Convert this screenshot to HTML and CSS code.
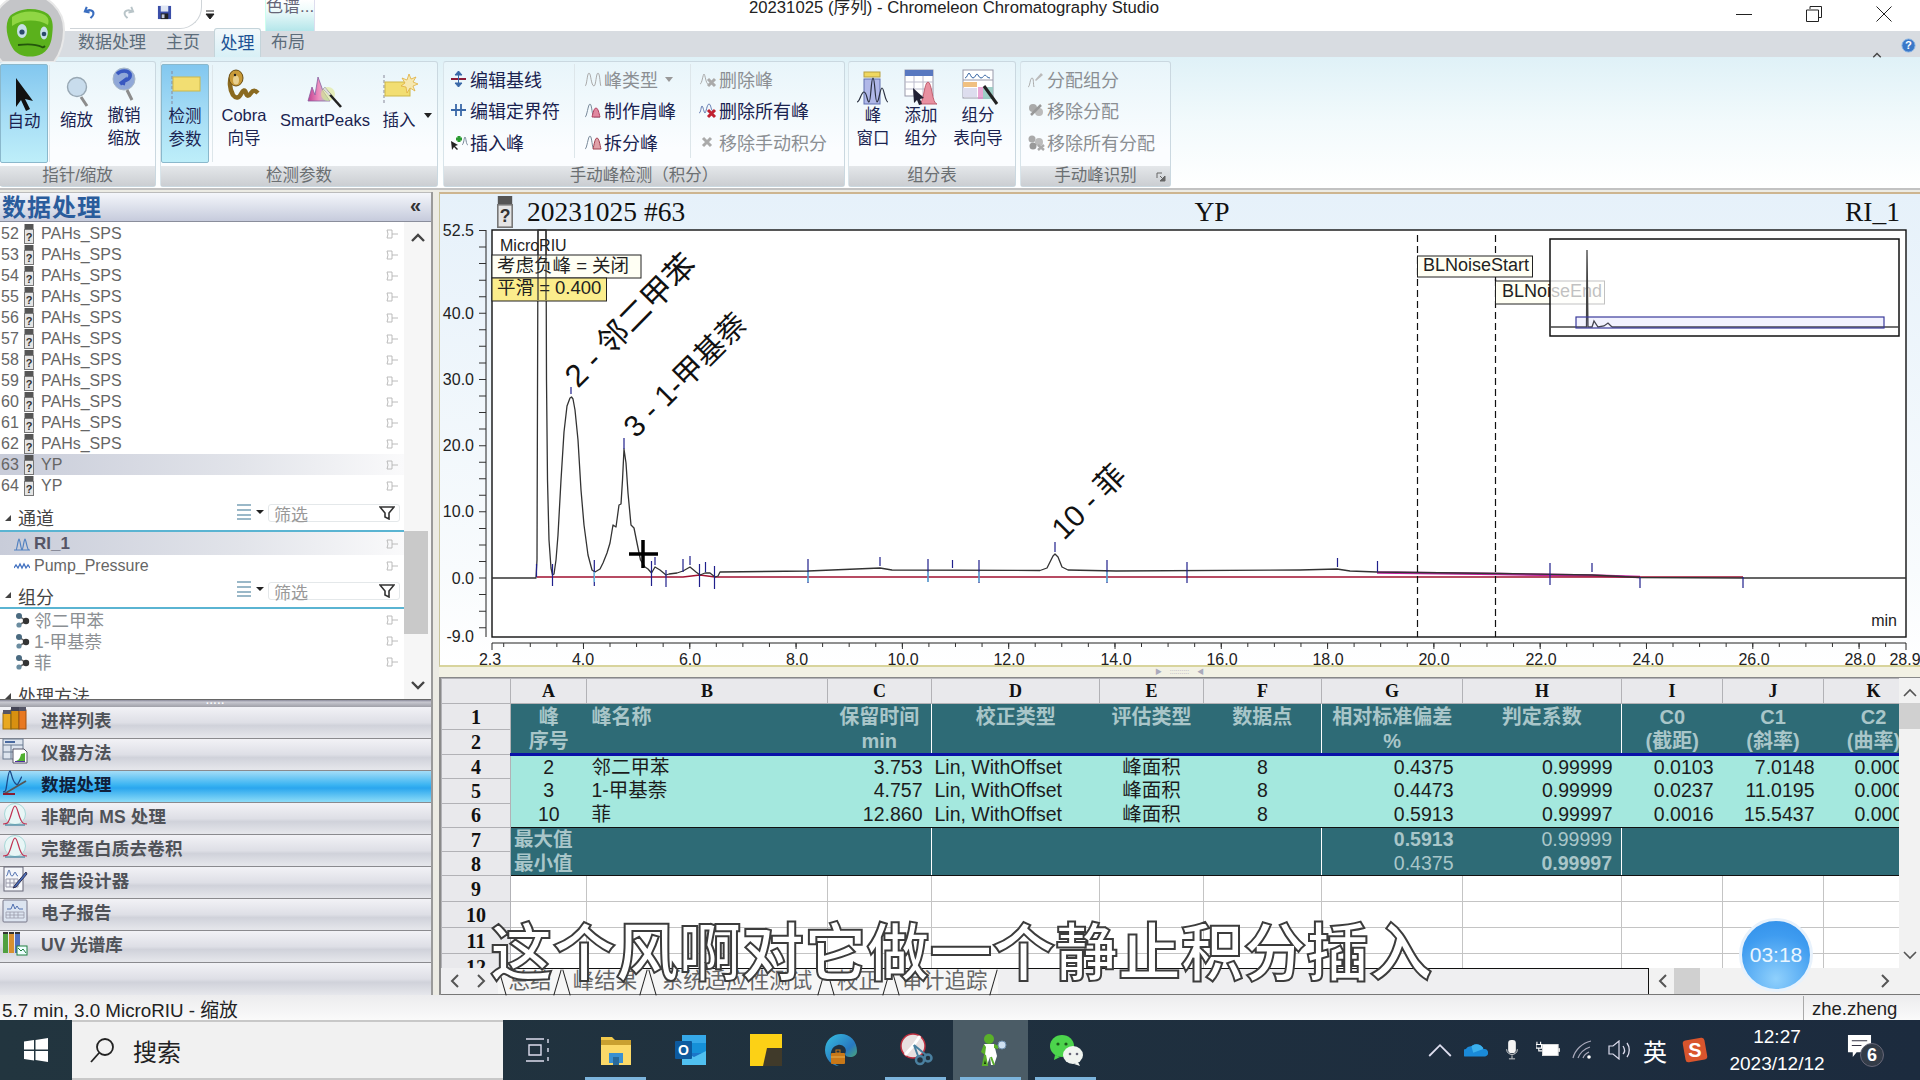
FILE: index.html
```html
<!DOCTYPE html>
<html lang="zh-CN">
<head>
<meta charset="utf-8">
<title>Chromeleon Chromatography Studio</title>
<link rel="stylesheet" href="styles.css">
</head>
<body>
<svg class="defs" width="0" height="0" aria-hidden="true">
  <defs>
    <symbol id="vial" viewBox="0 0 10 20">
      <rect x="0.5" y="0" width="9" height="5" fill="#555"/>
      <rect x="0.5" y="5.5" width="9" height="14" fill="#e4e4e4" stroke="#777"/>
      <text x="5" y="16.5" class="vialq">?</text>
    </symbol>
    <symbol id="pin" viewBox="0 0 14 12">
      <path d="M2 2h5v8H2l1-4zM7 6h6" fill="none" stroke="#b4b4b4" stroke-width=".9"/>
    </symbol>
    <symbol id="mol" viewBox="0 0 16 16">
      <path d="M5 4l7 5-7 4" fill="none" stroke="#666" stroke-width="1.5"/>
      <circle cx="5" cy="4" r="3" fill="#4a6a80"/>
      <circle cx="12" cy="9" r="3.2" fill="#333"/>
      <circle cx="5" cy="13" r="2.6" fill="#6a8ca0"/>
    </symbol>
    <symbol id="bars" viewBox="0 0 30 20">
      <path d="M2 3h14M2 8h14M2 13h14M2 17h14" stroke="#9ab8c8" stroke-width="2"/>
      <path d="M21 8h8l-4 4z" fill="#222"/>
    </symbol>
    <symbol id="funnel" viewBox="0 0 16 14">
      <path d="M1 1h14L10 7v6L6 11V7z" fill="#fff" stroke="#333" stroke-width="1.6"/>
    </symbol>
    <symbol id="peakc" viewBox="0 0 26 26">
      <circle cx="13" cy="12" r="10.5" fill="#e8f6f6" stroke="#a8d8d8"/>
      <path d="M1 22c5 0 5-1 7-6s3-12 5-12 3 7 5 12 3 6 7 6" fill="none" stroke="#c03050" stroke-width="1.2"/>
      <path d="M3 23h20" stroke="#207090" stroke-width="1"/>
    </symbol>
    <symbol id="tri" viewBox="0 0 8 8"><path d="M7 1v6H1z" fill="#444"/></symbol>
  </defs>
</svg>

<header class="titlebar">
  <svg class="logo" viewBox="0 0 76 62">
    <path d="M-8 30a36 36 0 0 1 72 0c0 12-4 24-10 32H2C-5 54-8 42-8 30z" fill="#c4c5c8" stroke="#e8e8e8" stroke-width="2"/>
    <path d="M10 16c10-9 28-9 38-2 6 6 5 14 4 22-1 10-6 18-16 20-10 2-20-1-24-9C7 38 4 24 10 16z" fill="#5bb11c"/>
    <path d="M12 17c10-7 24-7 33-2 4 3 4 6 3 10-10-6-26-6-36 1z" fill="#90d644"/>
    <ellipse cx="22" cy="31" rx="5" ry="7" fill="#c6dfe8"/>
    <ellipse cx="44" cy="33" rx="3.800" ry="6.500" fill="#c6dfe8"/>
    <circle cx="22" cy="32" r="2.600" fill="#2a4a6a"/>
    <circle cx="44" cy="34" r="2.300" fill="#2a4a6a"/>
    <path d="M18 45c8-1 18-1 24 2 1 1 2 0 3-1" fill="none" stroke="#23560c" stroke-width="1.8"/>
  </svg>
  <div class="qat">
    <svg class="qi" viewBox="0 0 16 16"><path d="M4 2l-2 5 5 1M3 7c4-3 9-1 8 3-.4 2-2 3-3 4" fill="none" stroke="#3a6ec0" stroke-width="2.2"/></svg>
    <svg class="qi" viewBox="0 0 16 16"><path d="M12 2l2 5-5 1M13 7c-4-3-9-1-8 3 .4 2 2 3 3 4" fill="none" stroke="#b8c4c8" stroke-width="2"/></svg>
    <svg class="qi" viewBox="0 0 16 16"><rect x="1" y="1" width="14" height="14" fill="#3a4ea8"/><rect x="4" y="1" width="8" height="6" fill="#dfe6f4"/><rect x="4" y="9" width="8" height="6" fill="#222"/><rect x="5" y="10" width="3" height="4" fill="#c0c8dc"/></svg>
  </div>
  <svg class="qmore" viewBox="0 0 10 10"><path d="M1 1h8M1 4h8l-4 5z" stroke="#222" fill="#222"/></svg>
  <div class="ctx">色谱...</div>
  <div class="wintitle">20231025 (序列) - Chromeleon Chromatography Studio</div>
  <div class="winbtns">
    <svg class="wb" viewBox="0 0 16 16"><path d="M0 8.5h16" stroke="#222"/></svg>
    <svg class="wb" viewBox="0 0 16 16"><path d="M4 3V.5h11.500v11H12.500M.5 4h12v11.500H.5z" fill="none" stroke="#222"/></svg>
    <svg class="wb" viewBox="0 0 16 16"><path d="M.5.5l15 15M15.500.5l-15 15" stroke="#222"/></svg>
  </div>
</header>

<nav class="tabs">
  <span class="tab t1">数据处理</span>
  <span class="tab t2">主页</span>
  <span class="tab t3">处理</span>
  <span class="tab t4">布局</span>
  <svg class="collapse" viewBox="0 0 12 8"><path d="M1 7l5-5 5 5" fill="none" stroke="#444" stroke-width="1.800"/></svg>
  <svg class="help" viewBox="0 0 16 16"><circle cx="8" cy="8" r="7" fill="#3a78c8" stroke="#8ab4e4"/><text x="8" y="12" class="helpq">?</text></svg>
</nav>

<section class="ribbon">
  <div class="rgroup g1">
    <div class="rbody">
      <div class="lg active w48">
        <svg class="lgi" viewBox="0 0 48 48"><path d="M16 13l17 23-8-2 5 10-4 2-5-11-5 7z" fill="#111"/></svg>
        <span class="one">自动</span>
      </div>
      <div class="rsep s1"></div>
      <div class="lg w47">
        <svg class="lgi" viewBox="0 0 48 48"><circle cx="24" cy="23" r="9.500" fill="#c8dcec" stroke="#98a8b4" stroke-width="1.400"/><path d="M28 33l6 9" stroke="#8c8c8c" stroke-width="3"/></svg>
        <span class="one">缩放</span>
      </div>
      <div class="lg w48">
        <svg class="lgi" viewBox="0 0 48 48"><circle cx="24" cy="15" r="11" fill="#90a8d8" stroke="#a8b8c8"/><path d="M17 10c4-4 11-4 13 0 1 4-3 7-7 7M20 20l4-3-1 4" fill="none" stroke="#3858c0" stroke-width="3.600"/><path d="M27 26l5 10" stroke="#8c8c8c" stroke-width="3"/></svg>
        <span>撤销<br>缩放</span>
      </div>
    </div>
    <div class="rlabel">指针/缩放</div>
  </div>

  <div class="rgroup g2">
    <div class="rbody">
      <div class="lg active w48">
        <svg class="lgi" viewBox="0 0 48 48"><path d="M11 6v34" stroke="#889" stroke-dasharray="3 2"/><rect x="12" y="12" width="27" height="14" fill="#f2de72" stroke="#cdb84a"/></svg>
        <span>检测<br>参数</span>
      </div>
      <div class="rsep s2"></div>
      <div class="lg w50">
        <svg class="lgi" viewBox="0 0 48 48"><path d="M13 12c-5 3-3 14 0 19 3 4 6 3 8-1s4-5 5-1 3 3 5 0 4-3 7 0" fill="none" stroke="#8a6a20" stroke-width="4.500"/><ellipse cx="16" cy="14" rx="7" ry="8" fill="#c89a38" stroke="#6a4e14"/><ellipse cx="16" cy="16" rx="3" ry="4.500" fill="#e8d090"/><circle cx="15" cy="11" r="1.200" fill="#222"/></svg>
        <span>Cobra<br>向导</span>
      </div>
      <div class="lg w90 ml12">
        <svg class="lgi wide" viewBox="0 0 90 48"><defs><linearGradient id="rb" x1="0" x2="1"><stop offset="0" stop-color="#c04090"/><stop offset=".5" stop-color="#f090c0"/><stop offset="1" stop-color="#80e0c0"/></linearGradient></defs><path d="M28 37l4-14 3 8 3-18 5 14 7 10z" fill="url(#rb)" stroke="#8860a0" stroke-width=".8"/><circle cx="48" cy="30" r="7" fill="#e0e890" opacity=".6"/><path d="M44 24l17 19" stroke="#222" stroke-width="2.600"/><path d="M44 24l6 7" stroke="#ddd" stroke-width="2.600"/></svg>
        <span class="one">SmartPeaks</span>
      </div>
      <div class="lg w44 ml7">
        <svg class="lgi" viewBox="0 0 48 48"><path d="M9 11v29" stroke="#889" stroke-dasharray="3 2"/><rect x="10" y="18" width="25" height="14" fill="#f2de72" stroke="#cdb84a"/><path d="M34 10l2 5 5-2-3 5 5 2-5 2 2 5-5-3-3 5-1-6-5-1 4-3-3-5 5 2z" fill="#f6e8b0" stroke="#e0b040" stroke-width=".8"/></svg>
        <span class="one">插入</span>
      </div>
      <svg class="drop d1" viewBox="0 0 8 5"><path d="M0 0h8L4 5z" fill="#222"/></svg>
    </div>
    <div class="rlabel">检测参数</div>
  </div>

  <div class="rgroup g3">
    <div class="rbody cols">
      <div class="col c31">
        <div class="sm"><svg class="si" viewBox="0 0 18 18"><path d="M1 9h15" stroke="#8c1c38" stroke-width="2"/><path d="M8.500 1v16M8.500 1L5 5h7zM8.500 17L5 13h7z" fill="#3a68a8" stroke="#3a68a8"/></svg>编辑基线</div>
        <div class="sm"><svg class="si" viewBox="0 0 18 18"><path d="M1 9h15M6 3v12M11 3v12" stroke="#3a68a8" stroke-width="1.800"/></svg>编辑定界符</div>
        <div class="sm"><svg class="si" viewBox="0 0 18 18"><path d="M1 8l1 9 2-3 3 3 1-1-3-3 3-1z" fill="#222"/><path d="M6 6h6M9 3v6" stroke="#2a9a30" stroke-width="3"/><path d="M12 12c2-1 2-8 3-8s1 8 3 8" fill="none" stroke="#789" stroke-width="1"/></svg>插入峰</div>
      </div>
      <div class="col c32">
        <div class="sm dis"><svg class="si" viewBox="0 0 18 18"><path d="M1 16c2 0 2-13 4-13s2 13 5 13c2 0 2-13 4-13s2 13 3 13" fill="none" stroke="#aaa"/></svg>峰类型<svg class="drop d2" viewBox="0 0 8 5"><path d="M0 0h8L4 5z" fill="#999"/></svg></div>
        <div class="sm"><svg class="si" viewBox="0 0 18 18"><path d="M1 16c2 0 3-13 5-13s2 13 4 13c2 0 3 0 6 0" fill="none" stroke="#789"/><path d="M8 16c1-4 2-9 4-9s3 5 4 9z" fill="#e088a0" stroke="#b04060"/></svg>制作肩峰</div>
        <div class="sm"><svg class="si" viewBox="0 0 18 18"><path d="M1 16c2 0 3-13 5-13s2 13 4 13" fill="none" stroke="#789"/><path d="M9 16c1-4 2-11 4-11s3 7 4 11z" fill="#e0a0a8" stroke="#a04050"/></svg>拆分峰</div>
      </div>
      <div class="col c33">
        <div class="sm dis"><svg class="si" viewBox="0 0 18 18"><path d="M1 14c2 0 3-10 4-10s2 10 4 10" fill="none" stroke="#aaa"/><path d="M9 9l7 7M16 9l-7 7" stroke="#aaa" stroke-width="3"/></svg>删除峰</div>
        <div class="sm"><svg class="si" viewBox="0 0 18 18"><path d="M0 12c2 0 2-7 3-7s2 7 3 7 2-9 4-9 2 7 4 7" fill="none" stroke="#6078b0"/><path d="M9 9l7 7M16 9l-7 7" stroke="#c02030" stroke-width="3"/></svg>删除所有峰</div>
        <div class="sm dis"><svg class="si" viewBox="0 0 18 18"><path d="M4 5l8 8M12 5l-8 8" stroke="#aaa" stroke-width="3"/></svg>移除手动积分</div>
      </div>
    </div>
    <div class="rlabel">手动峰检测（积分）</div>
  </div>

  <div class="rgroup g4">
    <div class="rbody">
      <div class="lg w48">
        <svg class="lgi" viewBox="0 0 48 48"><rect x="15" y="8" width="16" height="5" fill="#f0d860" stroke="#b8a040"/><rect x="15" y="15" width="16" height="25" fill="#b0b8e8" stroke="#6070b0"/><path d="M8 38c3 0 4-10 7-10s3 10 5 10 2-24 4-24 2 24 4 24 3-14 5-14 3 14 6 14" fill="none" stroke="#2a3040" stroke-width="1.200"/></svg>
        <span>峰<br>窗口</span>
      </div>
      <div class="lg w48">
        <svg class="lgi" viewBox="0 0 48 48"><rect x="8" y="6" width="28" height="26" fill="#fff" stroke="#99a"/><rect x="8" y="6" width="28" height="6" fill="#5878c0"/><path d="M8 18h28M8 25h28M17 12v20M26 12v20" stroke="#bbc"/><path d="M22 40c5 0 5-22 9-22s4 22 9 22z" fill="#e890a0" stroke="#c06070"/><path d="M16 24l11 10-4 1 2 5-3 1-2-5-3 3z" fill="#223"/></svg>
        <span>添加<br>组分</span>
      </div>
      <div class="lg w66">
        <svg class="lgi" viewBox="0 0 48 48"><rect x="9" y="6" width="30" height="28" fill="#fff" stroke="#99a"/><path d="M11 14c2 0 3-5 4-5s2 5 4 5 3-4 4-4 2 4 4 4 3-3 4-3 2 3 5 3" fill="none" stroke="#3060a0"/><path d="M9 16h30" stroke="#99a"/><rect x="9" y="18" width="14" height="5" fill="#f0c080"/><rect x="9" y="24" width="14" height="9" fill="#dde"/><rect x="24" y="23" width="15" height="12" fill="#e080c0" opacity=".7"/><rect x="29" y="23" width="10" height="12" fill="#80e0c0" opacity=".7"/><path d="M30 22l13 18" stroke="#222" stroke-width="3"/></svg>
        <span>组分<br>表向导</span>
      </div>
    </div>
    <div class="rlabel">组分表</div>
  </div>

  <div class="rgroup g5">
    <div class="rbody cols">
      <div class="col c51">
        <div class="sm dis"><svg class="si" viewBox="0 0 18 18"><path d="M1 17c2 0 2-9 4-9s1 6 2 9" fill="none" stroke="#aaa"/><path d="M8 10l6-7 2 2-7 6z" fill="#bbb"/></svg>分配组分</div>
        <div class="sm dis"><svg class="si" viewBox="0 0 18 18"><circle cx="6" cy="7" r="4" fill="#aaa"/><circle cx="12" cy="11" r="4" fill="#bbb"/><path d="M4 14l10-10" stroke="#999" stroke-width="2.500"/></svg>移除分配</div>
        <div class="sm dis"><svg class="si" viewBox="0 0 18 18"><circle cx="5" cy="6" r="3.500" fill="#aaa"/><circle cx="12" cy="9" r="4" fill="#bbb"/><circle cx="6" cy="13" r="3.500" fill="#999"/><path d="M11 12l6 5M17 12l-6 5" stroke="#aaa" stroke-width="2.500"/></svg>移除所有分配</div>
      </div>
    </div>
    <div class="rlabel">手动峰识别<svg class="launch" viewBox="0 0 10 10"><path d="M1 1h5M1 1v5" stroke="#666"/><path d="M4 4l4 4M9 4v5H4z" stroke="#666" fill="#666"/></svg></div>
  </div>
</section>

<main class="main">
  <aside class="left">
    <div class="lhead"><span>数据处理</span><span class="dbl">«</span></div>
    <div class="lscroll">
      <div class="lcontent">
        <div class="list">
          <div class="row"><span class="num">52</span><svg class="vi"><use href="#vial"/></svg><span>PAHs_SPS</span><svg class="pn"><use href="#pin"/></svg></div>
          <div class="row"><span class="num">53</span><svg class="vi"><use href="#vial"/></svg><span>PAHs_SPS</span><svg class="pn"><use href="#pin"/></svg></div>
          <div class="row"><span class="num">54</span><svg class="vi"><use href="#vial"/></svg><span>PAHs_SPS</span><svg class="pn"><use href="#pin"/></svg></div>
          <div class="row"><span class="num">55</span><svg class="vi"><use href="#vial"/></svg><span>PAHs_SPS</span><svg class="pn"><use href="#pin"/></svg></div>
          <div class="row"><span class="num">56</span><svg class="vi"><use href="#vial"/></svg><span>PAHs_SPS</span><svg class="pn"><use href="#pin"/></svg></div>
          <div class="row"><span class="num">57</span><svg class="vi"><use href="#vial"/></svg><span>PAHs_SPS</span><svg class="pn"><use href="#pin"/></svg></div>
          <div class="row"><span class="num">58</span><svg class="vi"><use href="#vial"/></svg><span>PAHs_SPS</span><svg class="pn"><use href="#pin"/></svg></div>
          <div class="row"><span class="num">59</span><svg class="vi"><use href="#vial"/></svg><span>PAHs_SPS</span><svg class="pn"><use href="#pin"/></svg></div>
          <div class="row"><span class="num">60</span><svg class="vi"><use href="#vial"/></svg><span>PAHs_SPS</span><svg class="pn"><use href="#pin"/></svg></div>
          <div class="row"><span class="num">61</span><svg class="vi"><use href="#vial"/></svg><span>PAHs_SPS</span><svg class="pn"><use href="#pin"/></svg></div>
          <div class="row"><span class="num">62</span><svg class="vi"><use href="#vial"/></svg><span>PAHs_SPS</span><svg class="pn"><use href="#pin"/></svg></div>
          <div class="row sel"><span class="num">63</span><svg class="vi"><use href="#vial"/></svg><span>YP</span><svg class="pn"><use href="#pin"/></svg></div>
          <div class="row"><span class="num">64</span><svg class="vi"><use href="#vial"/></svg><span>YP</span><svg class="pn"><use href="#pin"/></svg></div>
        </div>
        <div class="sect first"><svg class="tr"><use href="#tri"/></svg><span class="stitle">通道</span><svg class="br"><use href="#bars"/></svg><div class="filter"><span>筛选</span><svg class="fn"><use href="#funnel"/></svg></div></div>
        <div class="row sub sel chn"><svg class="ci" viewBox="0 0 16 14"><path d="M0 13h16M2 13c1 0 2-11 3-11s2 11 3 11 2-11 3-11 2 11 4 11" fill="none" stroke="#5080c0" stroke-width="1.200"/></svg><b>RI_1</b><svg class="pn"><use href="#pin"/></svg></div>
        <div class="row sub"><svg class="ci" viewBox="0 0 16 14"><path d="M0 9l2-3 2 3 2-4 2 4 2-4 2 4 2-3 2 3" fill="none" stroke="#4070c0" stroke-width="1.300"/></svg><span>Pump_Pressure</span><svg class="pn"><use href="#pin"/></svg></div>
        <div class="sect second"><svg class="tr"><use href="#tri"/></svg><span class="stitle">组分</span><svg class="br"><use href="#bars"/></svg><div class="filter"><span>筛选</span><svg class="fn"><use href="#funnel"/></svg></div></div>
        <div class="row sub cmp"><svg class="ci" viewBox="0 0 16 16"><use href="#mol"/></svg><span>邻二甲苯</span><svg class="pn"><use href="#pin"/></svg></div>
        <div class="row sub cmp"><svg class="ci" viewBox="0 0 16 16"><use href="#mol"/></svg><span>1-甲基萘</span><svg class="pn"><use href="#pin"/></svg></div>
        <div class="row sub cmp"><svg class="ci" viewBox="0 0 16 16"><use href="#mol"/></svg><span>菲</span><svg class="pn"><use href="#pin"/></svg></div>
        <div class="sect last"><svg class="tr"><use href="#tri"/></svg><span class="stitle">处理方法</span></div>
      </div>
      <div class="lsb">
        <svg class="chev" viewBox="0 0 14 10"><path d="M1 8l6-6 6 6" fill="none" stroke="#444" stroke-width="2.400"/></svg>
        <div class="thumb"></div>
        <svg class="chev down" viewBox="0 0 14 10"><path d="M1 2l6 6 6-6" fill="none" stroke="#444" stroke-width="2.400"/></svg>
      </div>
    </div>
    <div class="lsplit"><i>.....</i></div>
    <div class="nav">
      <div class="nitem"><svg class="ni" viewBox="0 0 26 26"><rect x="1" y="7" width="8" height="16" fill="#e8a820" stroke="#a07010"/><rect x="9" y="4" width="8" height="19" fill="#d89010" stroke="#806010"/><rect x="17" y="4" width="7" height="19" fill="#e87820" stroke="#a05010"/><rect x="1" y="4" width="8" height="4" fill="#556"/><rect x="9" y="1" width="8" height="4" fill="#445"/><rect x="17" y="1" width="7" height="4" fill="#556"/></svg><span>进样列表</span></div>
      <div class="nitem"><svg class="ni" viewBox="0 0 26 26"><rect x="1" y="1" width="20" height="20" fill="#dde4ee" stroke="#6a7a90"/><path d="M1 7h20M1 14h12M9 7v14" stroke="#6a7a90"/><rect x="3" y="3" width="10" height="2" fill="#4a6aa0"/><path d="M11 11h11l3 3v11H11z" fill="#fff" stroke="#556"/><path d="M13 23c3 0 5-2 6-7l4-1v8z" fill="#50b030"/><path d="M13 23h10v1H13z" fill="#5030a0"/></svg><span>仪器方法</span></div>
      <div class="nitem on"><svg class="ni" viewBox="0 0 26 26"><path d="M1 22c3 0 3-2 4-9s2-12 3-12 2 9 5 12 2 2 4-1 2-5 3-5" fill="none" stroke="#1a4a8a" stroke-width="1.300"/><path d="M2 24l22-13" stroke="#555" stroke-width="1.800"/><path d="M1 24h12" stroke="#8a1c30" stroke-width="2"/></svg><span>数据处理</span></div>
      <div class="nitem"><svg class="ni"><use href="#peakc"/></svg><span>非靶向 MS 处理</span></div>
      <div class="nitem"><svg class="ni"><use href="#peakc"/></svg><span>完整蛋白质去卷积</span></div>
      <div class="nitem"><svg class="ni" viewBox="0 0 26 26"><rect x="2" y="1" width="19" height="24" fill="#f4f6fa" stroke="#667"/><path d="M4 10c2 0 2-6 3-6s1 6 3 6 2-4 3-4 1 4 3 4" fill="none" stroke="#5070b0"/><path d="M4 13h12v8H4zM8 13v8M12 13v8M4 17h12" fill="none" stroke="#99a"/><path d="M24 6l-11 13-2 3 3-1L25 8z" fill="#4870c0" stroke="#335"/></svg><span>报告设计器</span></div>
      <div class="nitem"><svg class="ni" viewBox="0 0 26 26"><rect x="1" y="2" width="24" height="22" rx="1" fill="#dce4f0" stroke="#778"/><path d="M5 11h4l2-5 2 5 2-3 2 3h4" fill="none" stroke="#5070b0"/><path d="M4 14h18v6H4zM4 17h18M8 14v6M12 14v6M16 14v6" fill="none" stroke="#99a" stroke-width=".8"/></svg><span>电子报告</span></div>
      <div class="nitem"><svg class="ni" viewBox="0 0 26 26"><rect x="1" y="3" width="5" height="20" fill="#50a040"/><rect x="7" y="3" width="5" height="20" fill="#d89030"/><rect x="13" y="3" width="5" height="20" fill="#5070c0"/><path d="M1 3h5M7 3h5M13 3h5" stroke="#333" stroke-width="2"/><rect x="15" y="16" width="10" height="9" fill="#eff" stroke="#208040"/><path d="M16 18l3 3 2-2 3 4" fill="none" stroke="#208040"/></svg><span class="cap">UV 光谱库</span></div>
      <div class="nitem empty"></div>
    </div>
  </aside>

  <section class="right">
    <div class="cpanel">
      <div class="chead">
        <div class="chl"><svg class="cvial"><use href="#vial"/></svg><span>20231025 #63</span></div>
        <div class="chm">YP</div>
        <div class="chr">RI_1</div>
      </div>
      <svg class="plot" viewBox="441 230 1479 438">
        <rect x="492" y="230" width="1414" height="407" class="pbg"/>
        <!-- y axis -->
        <path d="M486 230V637" class="ax"/>
        <path d="M482.500 230V637" class="tk ym"/>
        <text x="474" y="236" class="lbl ya">52.5</text>
        <text x="474" y="319" class="lbl ya">40.0</text>
        <text x="474" y="385" class="lbl ya">30.0</text>
        <text x="474" y="451" class="lbl ya">20.0</text>
        <text x="474" y="517" class="lbl ya">10.0</text>
        <text x="474" y="584" class="lbl ya">0.0</text>
        <text x="474" y="642" class="lbl ya">-9.0</text>
        <!-- x axis -->
        <path d="M492 643H1906" class="ax"/>
        <path d="M503.200 645H1906" class="tk xm"/>
        <path d="M583 646H1906" class="tk xj"/>
        <path d="M492 643v7M1906 643v7" class="ax"/>
        <text x="490" y="665" class="lbl xa">2.3</text>
        <text x="583" y="665" class="lbl xa">4.0</text>
        <text x="690" y="665" class="lbl xa">6.0</text>
        <text x="797" y="665" class="lbl xa">8.0</text>
        <text x="903" y="665" class="lbl xa">10.0</text>
        <text x="1009" y="665" class="lbl xa">12.0</text>
        <text x="1116" y="665" class="lbl xa">14.0</text>
        <text x="1222" y="665" class="lbl xa">16.0</text>
        <text x="1328" y="665" class="lbl xa">18.0</text>
        <text x="1434" y="665" class="lbl xa">20.0</text>
        <text x="1541" y="665" class="lbl xa">22.0</text>
        <text x="1648" y="665" class="lbl xa">24.0</text>
        <text x="1754" y="665" class="lbl xa">26.0</text>
        <text x="1860" y="665" class="lbl xa">28.0</text>
        <text x="1905" y="665" class="lbl xa">28.9</text>
        <text x="1897" y="626" class="lbl ya">min</text>
        <!-- baseline and fill -->
        <path d="M1377 572.500L1500 574L1592 575.500L1640 577" class="mag"/>
        <path d="M537 577H683L700 575 715 577H1743" class="red"/>
        <!-- trace -->
        <polyline class="trace" points="492,578 536,578 537,560 538,230 546,230 546.500,380 547.500,480 549,540 551,568 552.500,575 554,574 556,560 558,535 561,480 564,432 567,406 570,398 571.500,397 573,399 575,410 578,440 581,490 584,525 588,555 592,570 595,572 600,569 603,563 607,553 610,543 613,525 616,527 619,505 621,504 622.500,480 624,449 626,463 628,493 631,525 634,528 637,543 640.500,560 645,567 648,569 651.500,573 655,567 660,570 666,575 669,574 677,573 683,571 690,567 696,572 700,575 705,573 710,573 715,577 718,576 720,572 808,571 880,568 892,570 1040,570.500 1047,568 1051,560 1053,556 1055,554 1058,557 1062,567 1068,570 1116,571 1300,570 1337,569 1350,571 1377,572 1500,573.500 1592,575 1640,577.500 1743,578 1906,578"/>
        <!-- peak markers -->
        <path class="mk" d="M536.500 564V577M552.500 564V586M594.300 560V586M651.500 561V586M655 557V565M666 570V587M683 559V572M690 556V565M699.500 564V587M705.500 562V572M714.500 566V589M808 559V583M880 557V566M928 559V582M952.500 560V568M979 560V583M1055 542V552M1107 560V583M1187 562V583M571 387V394M624 438V449M1337.500 558V567M1377.500 561V572M1550 563V585M1592 563V572M1640 577V588M1743 577V588"/>
        <path class="mkb" d="M808 572V582M928 572V582M979 572V582M1107 572V582M594.300 572V582"/>
        <!-- retention labels -->
        <text x="0" y="0" class="pklbl pk1" transform="translate(578,389) rotate(-45.500)">2 - 邻二甲苯</text>
        <text x="0" y="0" class="pklbl" transform="translate(636,439) rotate(-45)">3 - 1-甲基萘</text>
        <text x="0" y="0" class="pklbl" transform="translate(1064,541) rotate(-45)">10 - 菲</text>
        <!-- parameter tags -->
        <text x="500" y="251" class="lbl">MicroRIU</text>
        <rect x="492" y="255" width="149" height="23" class="tag"/>
        <text x="497" y="272" class="tagt">考虑负峰 = 关闭</text>
        <rect x="492" y="278" width="114.500" height="23" class="tagy"/>
        <text x="497" y="293.500" class="tagt">平滑 = 0.400</text>
        <path d="M538 230V300M546 230V300" class="inj"/>
        <!-- noise range -->
        <path d="M1417.500 235V637M1495.500 235V637" class="dash"/>
        <rect x="1417.500" y="256" width="115" height="21" class="tag"/>
        <text x="1423" y="270.500" class="lbl big">BLNoiseStart</text>
        <rect x="1495.500" y="281" width="109" height="23" class="tag"/>
        <text x="1502" y="297" class="lbl big">BLNoiseEnd</text>
        <path d="M1495.500 277V281" class="dash"/>
        <!-- overview -->
        <rect x="1550" y="239" width="349" height="97" class="inset"/>
        <path d="M1550 327H1584M1612 327H1899" class="itr"/>
        <polyline class="itr" points="1584,327 1586.500,327 1587,250 1588,327 1592,327 1594,321 1598,327 1604,326 1608,323 1612,327"/>
        <rect x="1576" y="317" width="308" height="11" class="ibox"/>
        <!-- cursor -->
        <path d="M629 554H658M643 540V568" class="cross"/>
      </svg>
    </div>
    <div class="hsplit"><i class="arr">▶</i><i class="dots">::::::::::</i><i class="arr">◀</i></div>
    <div class="grid">
      <div class="gtable">
        <table>
          <colgroup><col class="c0"><col class="ca"><col class="cb"><col class="cc"><col class="cd"><col class="ce"><col class="cf"><col class="cg"><col class="ch"><col class="ci2"><col class="cj"><col class="ck"></colgroup>
          <tr class="r-col"><th class="corner"></th><th>A</th><th>B</th><th>C</th><th>D</th><th>E</th><th>F</th><th>G</th><th>H</th><th>I</th><th>J</th><th>K</th></tr>
          <tr class="r26 hd"><th class="rn">1</th><td class="ctr">峰</td><td class="lft">峰名称</td><td class="ctr">保留时间</td><td class="ctr wl">校正类型</td><td class="ctr">评估类型</td><td class="ctr">数据点</td><td class="ctr wl">相对标准偏差</td><td class="ctr">判定系数</td><td class="ctr wl">C0</td><td class="ctr">C1</td><td class="ctr">C2</td></tr>
          <tr class="r25b hd bl"><th class="rn">2</th><td class="ctr">序号</td><td class="lft"></td><td class="ctr">min</td><td class="wl"></td><td></td><td></td><td class="ctr wl">%</td><td></td><td class="ctr wl">(截距)</td><td class="ctr">(斜率)</td><td class="ctr">(曲率)</td></tr>
          <tr class="r24 dt"><th class="rn">4</th><td class="ctr">2</td><td class="lft">邻二甲苯</td><td class="rgt">3.753</td><td class="lf3">Lin, WithOffset</td><td class="ctr">峰面积</td><td class="ctr">8</td><td class="rgt">0.4375</td><td class="rgt">0.99999</td><td class="rgt">0.0103</td><td class="rgt">7.0148</td><td class="k">0.0000</td></tr>
          <tr class="r24 dt"><th class="rn">5</th><td class="ctr">3</td><td class="lft">1-甲基萘</td><td class="rgt">4.757</td><td class="lf3">Lin, WithOffset</td><td class="ctr">峰面积</td><td class="ctr">8</td><td class="rgt">0.4473</td><td class="rgt">0.99999</td><td class="rgt">0.0237</td><td class="rgt">11.0195</td><td class="k">0.0000</td></tr>
          <tr class="r24 dt end"><th class="rn">6</th><td class="ctr">10</td><td class="lft">菲</td><td class="rgt">12.860</td><td class="lf3">Lin, WithOffset</td><td class="ctr">峰面积</td><td class="ctr">8</td><td class="rgt">0.5913</td><td class="rgt">0.99997</td><td class="rgt">0.0016</td><td class="rgt">15.5437</td><td class="k">0.0000</td></tr>
          <tr class="r25 sm1"><th class="rn">7</th><td class="lf2" colspan="2">最大值</td><td></td><td class="wl"></td><td></td><td></td><td class="rgt wl strong">0.5913</td><td class="rgt">0.99999</td><td class="wl"></td><td></td><td></td></tr>
          <tr class="r25 sm1 end2"><th class="rn">8</th><td class="lf2" colspan="2">最小值</td><td></td><td class="wl"></td><td></td><td></td><td class="rgt wl">0.4375</td><td class="rgt strong">0.99997</td><td class="wl"></td><td></td><td></td></tr>
          <tr class="r26 em"><th class="rn">9</th><td></td><td></td><td></td><td></td><td></td><td></td><td></td><td></td><td></td><td></td><td></td></tr>
          <tr class="r26 em"><th class="rn">10</th><td></td><td></td><td></td><td></td><td></td><td></td><td></td><td></td><td></td><td></td><td></td></tr>
          <tr class="r26 em"><th class="rn">11</th><td></td><td></td><td></td><td></td><td></td><td></td><td></td><td></td><td></td><td></td><td></td></tr>
          <tr class="r26 em"><th class="rn">12</th><td></td><td></td><td></td><td></td><td></td><td></td><td></td><td></td><td></td><td></td><td></td></tr>
        </table>
        <div class="vsb">
          <svg class="vch" viewBox="0 0 14 10"><path d="M1 8l6-6 6 6" fill="none" stroke="#555" stroke-width="1.600"/></svg>
          <div class="vth"></div>
          <svg class="vch dn" viewBox="0 0 14 10"><path d="M1 2l6 6 6-6" fill="none" stroke="#555" stroke-width="1.600"/></svg>
        </div>
      </div>
      <div class="sheets">
        <div class="snav"><svg class="sa" viewBox="0 0 10 14"><path d="M8 1L2 7l6 6" fill="none" stroke="#555" stroke-width="2"/></svg><svg class="sa" viewBox="0 0 10 14"><path d="M2 1l6 6-6 6" fill="none" stroke="#555" stroke-width="2"/></svg></div>
        <div class="stabs">
          <span class="stab w64">总结</span><span class="stab w86">峰结果</span><span class="stab w178">系统适应性测试</span><span class="stab w65">校正</span><span class="stab w107">审计追踪</span>
        </div>
        <div class="hscroll">
          <svg class="sa" viewBox="0 0 10 14"><path d="M8 1L2 7l6 6" fill="none" stroke="#555" stroke-width="2"/></svg>
          <div class="hth"></div>
          <svg class="sa ra" viewBox="0 0 10 14"><path d="M2 1l6 6-6 6" fill="none" stroke="#555" stroke-width="2"/></svg>
        </div>
      </div>
    </div>
  </section>
</main>

<footer class="status"><span>5.7 min, 3.0 MicroRIU - 缩放</span><span class="user">zhe.zheng</span></footer>

<footer class="taskbar">
  <div class="start"><svg class="winlogo" viewBox="0 0 24 24"><path d="M0 3.500l10-1.400v9.400H0zM11.500 1.900L24 0v11.500H11.500zM0 13h10v9.400L0 21zM11.500 13H24v11l-12.500-1.900z" fill="#fff"/></svg></div>
  <div class="search"><svg class="mag" viewBox="0 0 26 26"><circle cx="15" cy="10" r="8" fill="none" stroke="#222" stroke-width="1.800"/><path d="M9 16l-8 9" stroke="#222" stroke-width="1.800"/></svg><span>搜索</span></div>
  <div class="slot tv"><svg class="tvi" viewBox="0 0 24 24"><path d="M0 1h18M0 23h18M3 7h12v10H3zM22 1v4M22 10v4M22 19v4" fill="none" stroke="#dde" stroke-width="1.400"/></svg></div>
  <div class="slot line"><svg class="app" viewBox="0 0 34 34"><path d="M2 4h11l3 3h16v25H2z" fill="#f2c94c"/><path d="M2 7h30v5H2z" fill="#c9a030"/><path d="M2 12h30v20H2z" fill="#fbd968"/><path d="M10 20h14v10h-4v-6h-6v6h-4z" fill="#3a90d0"/><path d="M14 24h6v8h-6z" fill="#2a6a9a"/></svg></div>
  <div class="slot"><svg class="app" viewBox="0 0 34 34"><path d="M8 2h24v30H8z" fill="#1b75c8"/><path d="M8 2h24v8H8z" fill="#35a8e8"/><path d="M16 10h16v10H16z" fill="#1590d8"/><path d="M8 18l12 6 12-6v14H8z" fill="#50c0f0"/><rect x="1" y="8" width="17" height="18" rx="1" fill="#0d5a9e"/><text x="9.500" y="22" class="oglyph">O</text></svg></div>
  <div class="slot"><svg class="app" viewBox="0 0 34 34"><path d="M1 1h32v32H1z" fill="#fcd116"/><path d="M33 15v18H14l4-18z" fill="#403a2a"/></svg></div>
  <div class="slot"><svg class="app" viewBox="0 0 34 34"><defs><linearGradient id="edg" x1="0" y1="0" x2="1" y2="1"><stop offset="0" stop-color="#37c0e0"/><stop offset=".6" stop-color="#2878c0"/><stop offset="1" stop-color="#60c050"/></linearGradient></defs><path d="M1 17C1 7 9 1 17 1c9 0 16 7 16 17 0 4-3 6-7 6-3 0-5-1-5-3 3-5-2-10-7-9-6 1-9 8-6 14 1 3 4 6 7 7C8 33 1 26 1 17z" fill="url(#edg)"/><rect x="7" y="20" width="14" height="11" rx="1" fill="#c87818"/><rect x="12" y="17" width="4" height="3" fill="none" stroke="#c87818"/><path d="M7 24h14" stroke="#e8b050"/></svg></div>
  <div class="slot line"><svg class="app" viewBox="0 0 34 34"><circle cx="14" cy="13" r="12" fill="#e8e0e0" stroke="#c03040" stroke-width="1.500"/><path d="M14 13l7-10M14 13l-8 9" stroke="#fff" stroke-width="3"/><circle cx="21" cy="27" r="4" fill="none" stroke="#4a80a0" stroke-width="2.500"/><circle cx="29" cy="25" r="3.500" fill="none" stroke="#4a80a0" stroke-width="2.500"/><path d="M19 23l-4-11M27 22L15 12" stroke="#4a80a0" stroke-width="2"/></svg></div>
  <div class="slot hi line"><svg class="app" viewBox="0 0 34 34"><circle cx="15" cy="6" r="5" fill="#5ab02a"/><path d="M10 11h10l3 12-3 9h-3l-1-8-3 8h-4l2-10z" fill="#fff"/><path d="M10 11l-3 8 4 3 1-8zM20 11l5 2-1 3-4-1z" fill="#5ab02a"/><path d="M11 22l-2 10h4zM17 24l3 8" stroke="#5ab02a" stroke-width="2"/><circle cx="28" cy="12" r="4" fill="#cfe0f0" stroke="#7090b0"/></svg></div>
  <div class="slot line"><svg class="app" viewBox="0 0 34 34"><ellipse cx="13" cy="13" rx="12" ry="11" fill="#4cd44c"/><path d="M6 22l-1 5 6-3z" fill="#4cd44c"/><ellipse cx="24" cy="22" rx="10" ry="9" fill="#f0f4f0"/><path d="M29 29l2 4-6-2z" fill="#f0f4f0"/><circle cx="9" cy="11" r="1.600" fill="#1a5a1a"/><circle cx="17" cy="11" r="1.600" fill="#1a5a1a"/><circle cx="21" cy="21" r="1.300" fill="#667"/><circle cx="28" cy="21" r="1.300" fill="#667"/></svg></div>
  <div class="tray">
    <svg class="tri" viewBox="0 0 20 12"><path d="M1 11l9-9 9 9" fill="none" stroke="#dde" stroke-width="1.500"/></svg>
    <svg class="tri" viewBox="0 0 26 16"><path d="M2 15a4 4 0 0 1 0-8 6 6 0 0 1 6-3 8 8 0 0 1 13 3 4 4 0 0 1 2 8z" fill="#1a8ad8"/><path d="M8 4a8 8 0 0 1 13 3L10 11z" fill="#3cb0ec"/></svg>
    <svg class="tri" viewBox="0 0 16 26"><rect x="3" y="0" width="10" height="17" rx="4" fill="#f4f4f4"/><path d="M1 12c0 9 14 9 14 0M8 20v4M4 24.500h8" fill="none" stroke="#ddd" stroke-width="1.200"/></svg>
    <svg class="tri" viewBox="0 0 26 20"><path d="M1 1v3M5 1v3M0 4h6v4H0zM3 8v3h4" fill="none" stroke="#fff" stroke-width="1.200"/><rect x="7" y="4" width="17" height="12" fill="#fff" stroke="#ddd"/><rect x="24" y="8" width="2" height="4" fill="#ddd"/></svg>
    <svg class="tri" viewBox="0 0 24 20"><path d="M1 18C3 10 10 3 19 1M6 18c2-5 6-9 12-11M11 18c1-3 4-5 6-6" fill="none" stroke="#aab" stroke-width="1.200"/><circle cx="17" cy="17" r="1.800" fill="#fff"/></svg>
    <svg class="tri" viewBox="0 0 24 20"><path d="M1 6h4l6-5v18l-6-5H1z" fill="none" stroke="#dde" stroke-width="1.200"/><path d="M15 6c2 3 2 6 0 8M19 3c3 4 3 10 0 14" fill="none" stroke="#dde" stroke-width="1.300"/></svg>
    <span class="ime">英</span>
    <svg class="sogou" viewBox="0 0 26 26"><rect x="2" y="2" width="22" height="22" rx="3" fill="#d9552d" transform="rotate(-10 13 13)"/><text x="13" y="20" class="sglyph">S</text></svg>
    <div class="clock"><span>12:27</span><span>2023/12/12</span></div>
    <div class="notif"><svg class="nbub" viewBox="0 0 26 26"><path d="M1 1h24v18H10l-4 5v-5H1z" fill="#fff"/><path d="M5 7h16M5 12h10" stroke="#334" stroke-width="1.200"/></svg><span class="badge">6</span></div>
  </div>
</footer>

<div class="subtitle">这个风啊对它做一个静止积分插入</div>
<div class="timer">03:18</div>
</body>
</html>
```

FILE: styles.css
```css
* { box-sizing: border-box; }
html, body { margin: 0; padding: 0; }
body {
  width: 1920px; height: 1080px; overflow: hidden; position: relative;
  display: flex; flex-direction: column;
  font-family: "Liberation Sans", "Noto Sans CJK SC", sans-serif;
  background: #fff; color: #222;
}
.defs { position: absolute; }
.vialq { font: bold 11px "Liberation Sans", sans-serif; text-anchor: middle; fill: #333; }

/* title bar */
.titlebar { height: 31px; flex: none; display: flex; background: #fff; position: relative; }
.logo { position: absolute; left: 0; top: 0; width: 76px; height: 62px; z-index: 3; overflow: hidden; }
.qat {
  margin-left: 70px; width: 132px; height: 29px; display: flex; align-items: flex-start;
  border: 1px solid #cfd4d8; border-top: 0; border-left: 0; border-radius: 0 0 22px 0;
  background: #fff; padding: 5px 0 0 13px; gap: 22px;
}
.qi { width: 15px; height: 15px; }
.qmore { width: 10px; height: 10px; margin: 10px 0 0 3px; }
.ctx {
  margin-left: 50px; width: 50px; height: 31px; flex: none;
  background: linear-gradient(#fff, #f0fbfb 30%, #b4e6ea);
  font-size: 17px; color: #667; line-height: 14px; text-align: center; white-space: nowrap; overflow: hidden;
  border-left: 1px solid #cfe; border-right: 1px solid #dde;
}
.wintitle {
  position: absolute; left: 0; right: 12px; top: -1px; text-align: center;
  font-size: 16.700px; line-height: 17px; color: #222; pointer-events: none;
}
.winbtns { margin-left: auto; display: flex; padding: 6px 28px 0 0; gap: 54px; }
.wb { width: 16px; height: 16px; }

/* tabs */
.tabs { height: 26px; flex: none; display: flex; align-items: stretch; background: #d8dce1; position: relative; font-size: 17px; color: #5c6c7a; }
.tab { line-height: 24px; white-space: nowrap; }
.t1 { margin-left: 78px; }
.t2 { margin-left: 20px; }
.t3 {
  margin: -3px 0 0 14px; width: 47px; text-align: center; color: #1c5294; line-height: 30px;
  background: linear-gradient(#f2f8fb, #d8f0f6); border: 1px solid #c4d4da; border-bottom: 0; border-radius: 3px 3px 0 0;
}
.t4 { margin-left: 10px; }
.collapse { position: absolute; right: 36px; top: 21px; width: 14px; height: 6px; overflow: hidden; }
.help { position: absolute; right: 4px; top: 7px; width: 15px; height: 15px; }
.helpq { font: bold 12px "Liberation Sans", sans-serif; fill: #fff; text-anchor: middle; }

/* ribbon */
.ribbon {
  height: 133px; flex: none; display: flex; align-items: flex-start; padding-top: 4px;
  background: linear-gradient(#dff1f7, #f2fafc 50%, #ffffff);
  border-bottom: 2px solid #c2c2c2;
  font-size: 17px; color: #1a2350;
}
.rgroup {
  height: 126px; display: flex; flex-direction: column;
  background: linear-gradient(#e8f5fa, #fbfdff 70%);
  border: 1px solid #cad8e0; border-radius: 3px; border-left-color: #d8e4ea;
}
.g1 { width: 156px; border-left: 0; }
.g2 { width: 278px; margin-left: 4px; }
.g3 { width: 402px; margin-left: 5px; }
.g4 { width: 168px; margin-left: 3px; }
.g5 { width: 151px; margin-left: 4px; }
.rbody { height: 104px; display: flex; align-items: flex-start; position: relative; padding-top: 2px; }
.rlabel {
  height: 20px; flex: none; position: relative; text-align: center; line-height: 19px;
  font-size: 16.500px; color: #6b6f72;
  background: linear-gradient(#e4e7ea, #cbced2);
}
.launch { position: absolute; right: 4px; top: 6px; width: 10px; height: 10px; }
.lg {
  height: 99px; display: flex; flex-direction: column; align-items: center; flex: none;
  line-height: 23px; text-align: center; white-space: nowrap; font-size: 16.500px;
}
.lg.active { background: linear-gradient(#82c7ef, #a5dcf5 50%, #bdeef9); border: 1px solid #8ab8cc; border-radius: 2px; }
.lgi { width: 48px; height: 48px; margin-bottom: -8px; flex: none; overflow: visible; }
.lgi.wide { width: 90px; }
.lg .one { margin-top: 5px; }
.w44 { width: 44px; } .w47 { width: 47px; } .w48 { width: 48px; } .w50 { width: 50px; } .w66 { width: 66px; } .w90 { width: 90px; }
.ml7 { margin-left: 7px; } .ml12 { margin-left: 11px; }
.rsep { width: 1px; height: 97px; background: #dde6ea; flex: none; }
.s1 { margin: 1px 3px 0 1px; }
.s2 { margin: 1px 6px 0 3px; }
.drop { width: 8px; height: 5px; }
.d1 { position: absolute; left: 263px; top: 51px; }
.d2 { margin: 0 0 0 7px; }
.cols { padding: 1.500px 0 0; }
.col { display: flex; flex-direction: column; height: 94px; flex: none; }
.c31 { width: 131px; padding-left: 6px; border-right: 1px solid #dde6ea; }
.c32 { width: 116px; padding-left: 9px; border-right: 1px solid #dde6ea; }
.c33 { width: 150px; padding-left: 8px; }
.c51 { width: 148px; padding-left: 6px; }
.sm { height: 31.500px; display: flex; align-items: center; font-size: 18px; white-space: nowrap; }
.si { width: 18px; height: 18px; margin-right: 2px; flex: none; }
.dis { color: #8b8f93; }

/* main */
.main { flex: 1; min-height: 0; display: flex; padding-top: 2px; background: #ecebe4; }

/* left panel */
.left { width: 433px; flex: none; display: flex; flex-direction: column; border-right: 2px solid #9a9a9a; background: #fff; }
.lhead {
  height: 30px; flex: none; display: flex; align-items: center; justify-content: space-between;
  padding: 0 9px 3px 2px; font-size: 24px; color: #2a5c9c; letter-spacing: 1px; font-weight: 700;
  background: linear-gradient(#f4f6fb, #c6cbdc); border-top: 1px solid #bbb; border-bottom: 1px solid #8a8e9c;
}
.dbl { font-size: 20px; color: #333; }
.lscroll { height: 477px; flex: none; display: flex; overflow: hidden; }
.lcontent { width: 404px; flex: none; font-size: 16px; color: #666; padding-top: 1px; }
.row { height: 21px; display: flex; align-items: center; padding-right: 5px; }
.num { width: 24px; padding-left: 1px; flex: none; }
.vi { width: 10px; height: 20px; margin-right: 7px; flex: none; }
.pn { width: 14px; height: 12px; margin-left: auto; flex: none; }
.row.sel { background: linear-gradient(90deg, #c8ccd9, #e2e4ea 60%, #fafafb); }
.sub { padding-left: 14px; }
.chn { height: 23px; }
.chn b { font-size: 17px; color: #556; }
.ci { width: 16px; height: 14px; margin-right: 4px; flex: none; }
.cmp { font-size: 17.500px; color: #8b8f93; }
.cmp .ci { height: 16px; }
.sect { height: 36px; display: flex; align-items: flex-end; position: relative; border-bottom: 2px solid #5ab4d2; padding-bottom: 0; color: #444; }
.sect.second { height: 33px; }
.sect.second .stitle { margin-bottom: -2px; }
.sect.second .filter { margin-bottom: 7px; }
.sect.last { border: 0; }
.tr { width: 8px; height: 8px; margin: 0 6px 8px 4px; flex: none; }
.stitle { font-size: 18px; line-height: 22px; margin-right: auto; }
.br { width: 30px; height: 20px; margin: 0 3px 8px 0; flex: none; }
.filter {
  width: 132px; height: 18px; margin: 0 4px 8px 0; display: flex; align-items: center; justify-content: space-between;
  border: 1px solid #e4e8ea; border-radius: 3px; padding: 0 4px 0 5px; font-size: 17px; color: #999;
}
.fn { width: 16px; height: 14px; }
.lsb { width: 27px; flex: none; display: flex; flex-direction: column; align-items: center; background: #f6f6f6; }
.chev { width: 14px; height: 10px; margin-top: 11px; flex: none; }
.chev.down { margin-top: auto; margin-bottom: 9px; }
.thumb { width: 24px; height: 103px; margin-top: 288px; margin-right: 3px; background: #c9c9c9; flex: none; }
.lsplit { height: 8px; flex: none; background: linear-gradient(#8a8a9a, #c8c8d0 30%, #9fa0a8); text-align: center; border-top: 1px solid #666; position: relative; overflow: hidden; }
.lsplit i { font: bold 10px/2px "Liberation Sans", sans-serif; letter-spacing: 1px; color: #fff; display: block; }
.nav { flex: 1; display: flex; flex-direction: column; font-size: 17.500px; color: #4f5258; }
.nitem {
  height: 32px; flex: none; display: flex; align-items: center; padding: 0 0 7px 2px;
  background: linear-gradient(#f2f2f6, #dedfe6 50%, #d0d2da 60%, #e6e7ec);
  border-bottom: 1px solid #8a8a8e; font-weight: 700; letter-spacing: .2px;
}
.nitem.on { background: linear-gradient(#a4ddf8, #3ab4f2 45%, #2aa6ee 55%, #8cdcf8); color: #10203a; }
.nitem.empty { border-bottom: 0; flex: 1; }
.ni { width: 26px; height: 26px; margin-right: 13px; flex: none; }
.cap { letter-spacing: 0; }

/* right panel */
.right { flex: 1; min-width: 0; display: flex; flex-direction: column; margin-left: 6px; }
.cpanel {
  height: 475px; flex: none; background: linear-gradient(#e6f1fa, #f8fbfd 80%, #fff);
  border-top: 2px solid #cdb590; border-left: 1px solid #c8c49c; border-bottom: 2px solid #d8d49c;
}
.chead { height: 36px; display: flex; align-items: center; font-family: "Liberation Serif", "Noto Sans CJK SC", serif; font-size: 27.500px; color: #111; }
.chl { width: 739px; flex: none; display: flex; align-items: center; padding-left: 56px; }
.cvial { width: 18px; height: 32px; margin-right: 13px; }
.chm { width: 66px; text-align: center; flex: none; }
.chr { flex: 1; text-align: right; padding-right: 20px; }
.plot { display: block; width: 1479px; height: 438px; overflow: visible; margin-left: 1px; }
.pbg { fill: #fff; stroke: #111; stroke-width: 1.400; }
.ax { fill: none; stroke: #222; stroke-width: 1; }
.tk { fill: none; stroke: #333; }
.ym { stroke-width: 7; stroke-dasharray: 1 15.550; }
.xm { stroke-width: 4; stroke-dasharray: 1 25.575; }
.xj { stroke-width: 6; stroke-dasharray: 1 105.300; }
.lbl { font: 16px "Liberation Sans", sans-serif; fill: #222; }
.ya { text-anchor: end; }
.xa { text-anchor: middle; }
.big { font-size: 18px; }
.trace { fill: none; stroke: #333; stroke-width: 1.300; stroke-linejoin: round; }
.red { fill: none; stroke: #a01030; stroke-width: 1.300; }
.mag { fill: none; stroke: #c020a0; stroke-width: 2.500; }
.mk { fill: none; stroke: #20208c; stroke-width: 1.200; }
.mkb { fill: none; stroke: #70c8e8; stroke-width: 1.200; }
.pklbl { font: 30px "Liberation Sans", "Noto Sans CJK SC", sans-serif; fill: #111; }
.pk1 { font-size: 31.500px; }
.tag { fill: #fffff4; stroke: #222; stroke-width: 1; }
.tagy { fill: #fbed8c; stroke: #222; stroke-width: 1; }
.tagt { font: 18.500px "Liberation Sans", "Noto Sans CJK SC", sans-serif; fill: #222; }
.inj { fill: none; stroke: #333; stroke-width: 1.200; }
.dash { fill: none; stroke: #111; stroke-width: 1.200; stroke-dasharray: 7 4; }
.inset { fill: #fff; fill-opacity: .72; stroke: #111; stroke-width: 1.500; }
.itr { fill: none; stroke: #444; stroke-width: 1.300; }
.ibox { fill: #5a5af0; fill-opacity: .08; stroke: #3a3a9a; stroke-width: 1.200; }
.cross { fill: none; stroke: #000; stroke-width: 3.500; }

.hsplit { height: 10px; flex: none; background: #f2f1e4; display: flex; justify-content: center; align-items: center; gap: 8px; color: #aab; font: 7px/10px "Liberation Sans", sans-serif; }
.hsplit i { font-style: normal; }
.dots { letter-spacing: 0; }

/* table */
.grid { flex: 1; min-height: 0; display: flex; flex-direction: column; background: #fff; border-left: 2px solid #8a8a8a; border-top: 1px solid #888; }
.gtable { height: 290px; flex: none; display: flex; overflow: hidden; }
table {
  width: 1481px; table-layout: fixed; border-collapse: collapse; flex: none;
  font-size: 19.500px; color: #1c1c1c; line-height: 1;
}
.gtable table { margin-right: -25px; }
.c0 { width: 69px; } .ca { width: 76px; } .cb { width: 241px; } .cc { width: 104px; } .cd { width: 168px; }
.ce { width: 104px; } .cf { width: 118px; } .cg { width: 141px; } .ch { width: 159px; } .ci2 { width: 101px; }
.cj { width: 101px; } .ck { width: 100px; }
th, td { padding: 0; white-space: nowrap; overflow: hidden; font-weight: 400; }
th { font-family: "Liberation Serif", "Noto Sans CJK SC", serif; font-weight: 700; background: #e9e9ec; color: #111; border: 1px solid #b2b2b6; }
.r-col { height: 25px; }
.r-col th { font-size: 18px; }
.corner { background: #e9e9ec; }
.rn { font-size: 20px; }
.r26 { height: 26px; }
.r25 { height: 24.300px; }
.r25b { height: 25px; }
.r24 { height: 24.300px; }
.hd td { background: #2e6b76; color: #a9c6c9; font-size: 20px; font-weight: 700; }
.bl td { border-bottom: 3px solid #0a10a8; }
.dt td { background: #a4e8de; color: #1c1c1c; font-size: 19.500px; }
.sm1 td { background: #2e6b76; color: #a9c6c9; font-size: 19.500px; }
.end td { border-bottom: 1.500px solid #111; }
.end2 td { border-bottom: 1.500px solid #111; }
.strong { font-weight: 700; }
.wl { border-left: 1px solid #fff; }
.em td { border: 1px solid #c4c4c4; background: #fff; }
.ctr { text-align: center; }
.lft { text-align: left; padding-left: 5px; }
.lf2 { text-align: left; padding-left: 3px; font-weight: 700; }
.lf3 { text-align: left; padding-left: 3px; }
.rgt { text-align: right; padding-right: 9px; }
.k { text-align: left; padding-left: 31px; }
.vsb { width: 22px; flex: none; background: #f2f2f2; display: flex; flex-direction: column; align-items: center; position: relative; }
.vch { width: 14px; height: 10px; margin-top: 10px; flex: none; }
.vch.dn { margin-top: auto; margin-bottom: 8px; }
.vth { width: 22px; height: 26px; margin-top: 5px; background: #d0d0d0; flex: none; }
.sheets { flex: 1; display: flex; background: #efeff1; font-size: 21.500px; color: #666; border-bottom: 1px solid #777; }
.snav { width: 57px; flex: none; display: flex; align-items: center; gap: 16px; padding-left: 9px; }
.sa { width: 10px; height: 14px; flex: none; }
.stabs { flex: 1; display: flex; align-items: stretch; border-top: 1.500px solid #111; border-right: 1.500px solid #111; padding-left: 0; }
.stab { position: relative; text-align: center; line-height: 25px; background: #f6f6f6; white-space: nowrap; flex: none; }
.stab::before, .stab::after { content: ""; position: absolute; top: 0; width: 1px; height: 27px; background: #222; }
.stab::before { left: 4px; transform: rotate(-16deg); }
.stab::after { right: 4px; transform: rotate(16deg); }
.w64 { width: 64px; } .w86 { width: 86px; } .w178 { width: 178px; } .w65 { width: 65px; } .w107 { width: 107px; }
.hscroll { width: 271px; flex: none; display: flex; align-items: center; padding-left: 9px; background: #f2f2f2; }
.hth { width: 26px; height: 100%; margin-left: 6px; background: #d0d0d0; flex: none; }
.ra { margin-left: auto; margin-right: 30px; }

/* status */
.status { height: 25px; flex: none; display: flex; justify-content: space-between; align-items: center; font-size: 18.800px; color: #222; padding: 1px 0 0 2px; background: linear-gradient(#ececee, #fafafa); }
.user { width: 117px; height: 100%; border-left: 1px solid #aaa; padding-left: 8px; line-height: 25px; font-size: 18.500px; }

/* taskbar */
.taskbar { height: 60px; flex: none; display: flex; align-items: stretch; color: #fff; background: linear-gradient(90deg, #22353f, #1c2b3e); }
.start { width: 72px; flex: none; display: flex; align-items: center; justify-content: center; }
.winlogo { width: 24px; height: 24px; }
.search { width: 431px; flex: none; background: #f1f1f1; display: flex; align-items: center; padding-left: 18px; color: #222; font-size: 24px; border-top: 2px solid #c8c8c8; border-bottom: 2px solid #c8c8c8; }
.mag { width: 26px; height: 26px; margin-right: 17px; }
.slot { width: 75px; flex: none; display: flex; align-items: center; justify-content: center; position: relative; }
.slot.tv { width: 75px; padding-right: 6px; }
.tvi { width: 24px; height: 24px; }
.app { width: 34px; height: 34px; }
.slot.line::after { content: ""; position: absolute; left: 7px; right: 7px; bottom: 0; height: 3px; background: #7cb4dc; }
.slot.hi { background: #4b5c66; }
.oglyph { font: bold 14px "Liberation Sans", sans-serif; fill: #fff; text-anchor: middle; }
.tray { margin-left: auto; width: 498px; flex: none; display: flex; align-items: center; }
.tri { width: 24px; height: 20px; margin: 0 6px; flex: none; }
.ime { width: 34px; flex: none; text-align: center; font-size: 24px; }
.sogou { width: 26px; height: 26px; margin: 0 12px 0 10px; flex: none; }
.sglyph { font: 900 20px "Liberation Sans", sans-serif; fill: #fff; text-anchor: middle; }
.clock { width: 114px; flex: none; display: flex; flex-direction: column; align-items: center; font-size: 19px; line-height: 27px; }
.notif { width: 54px; height: 40px; margin-left: 6px; flex: none; position: relative; padding: 4px 0 0 7px; }
.nbub { width: 25px; height: 25px; display: block; }
.badge { position: absolute; left: 20px; top: 13px; width: 24px; height: 24px; border-radius: 50%; background: #333c48; border: 1px solid #667; text-align: center; font: bold 18px/22px "Liberation Sans", sans-serif; }

/* overlays */
.subtitle {
  position: absolute; left: 490px; top: 905px; width: 960px; white-space: nowrap;
  font-size: 62.800px; line-height: 86px; font-weight: 700; color: #fff; font-family: "Noto Sans CJK SC", sans-serif;
  -webkit-text-stroke: 2px #3c3c3c; paint-order: normal;
}
.timer {
  position: absolute; left: 1739px; top: 918px; width: 74px; height: 74px; border-radius: 50%;
  background: radial-gradient(circle at 50% 85%, #8fd0fc, #3f9cf0 65%, #2f8ee8);
  border: 3px solid #e8f2fc; color: #eaf6ff; text-align: center; font-size: 21px; line-height: 68px;
}
```
